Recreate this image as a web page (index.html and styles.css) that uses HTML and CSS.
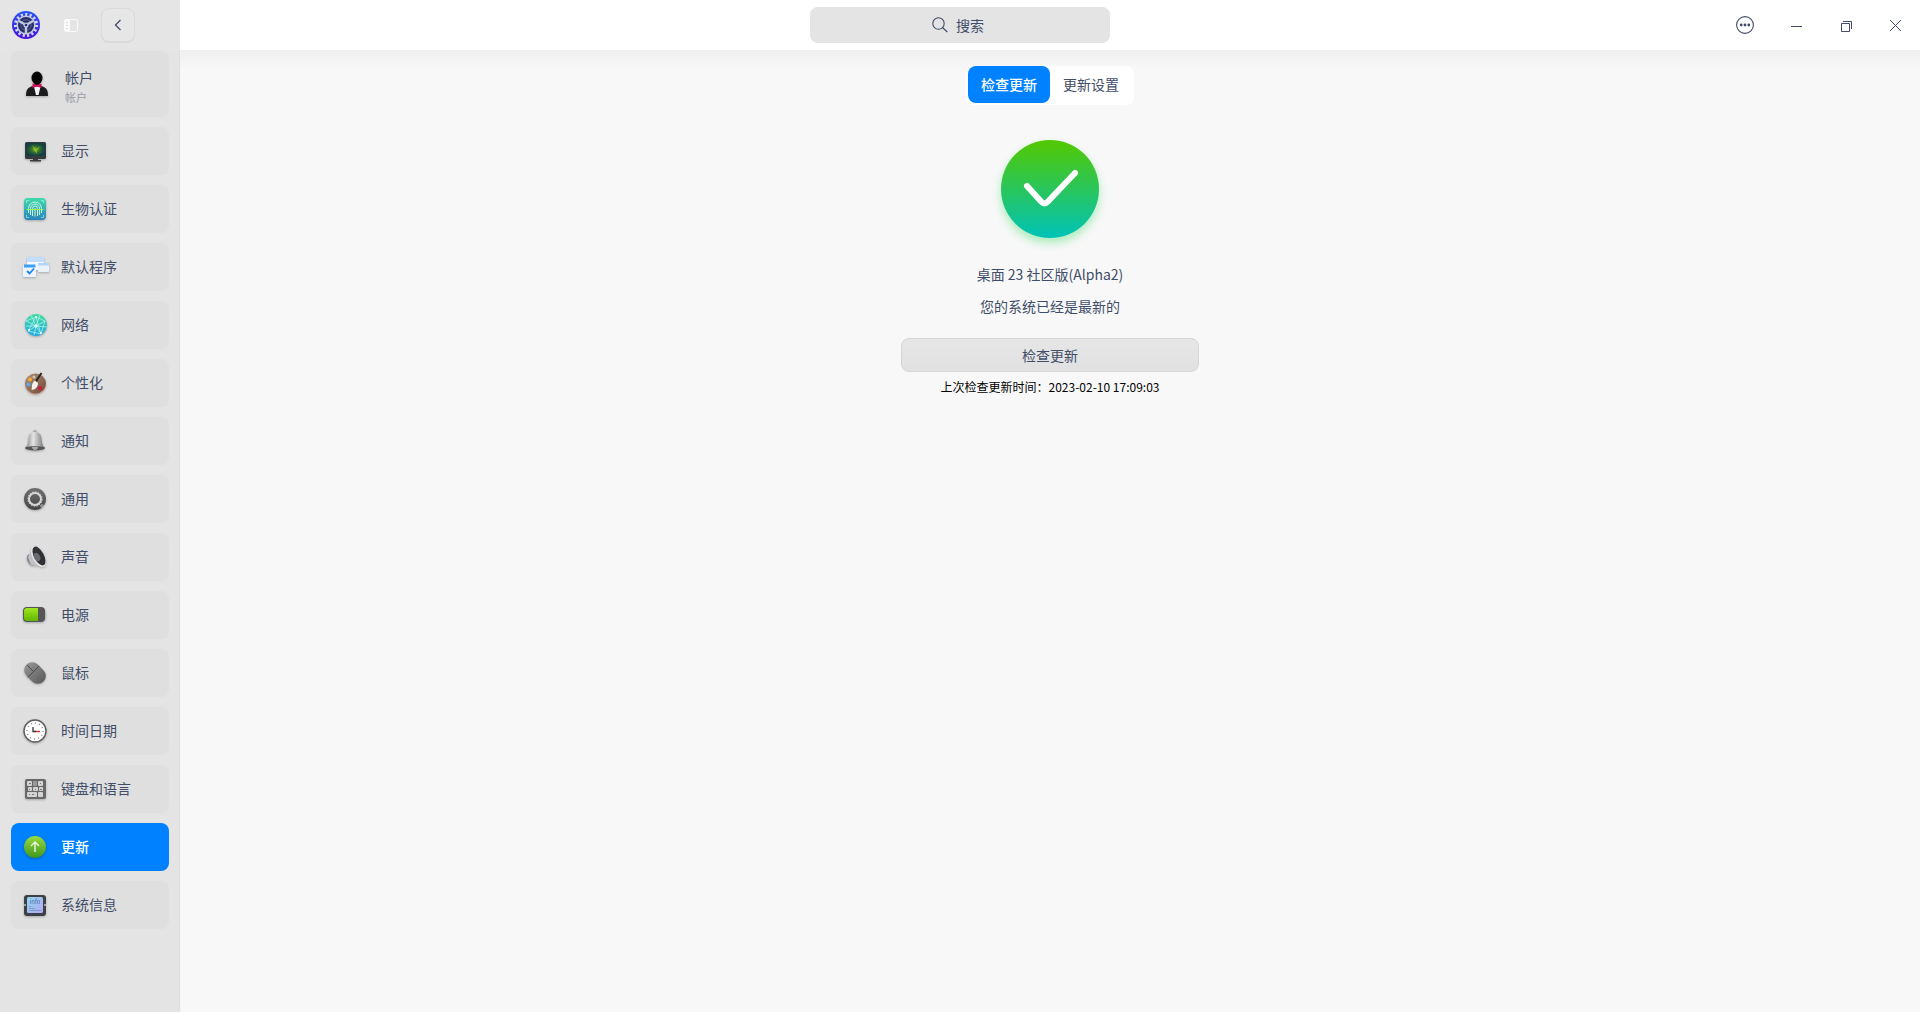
FILE: index.html
```html
<!DOCTYPE html>
<html lang="zh-CN">
<head>
    <meta charset="UTF-8">
    <meta name="viewport" content="width=device-width, initial-scale=1.0">
    <title>控制中心</title>
    <link rel="stylesheet" href="styles.css">
</head>
<body>

<header class="titlebar">
    <div class="titlebar-left">
        <svg class="logo" viewBox="0 0 28 28">
            <defs>
                <linearGradient id="logo-bg" x1="0" y1="0" x2="0" y2="1">
                    <stop offset="0" stop-color="#2b55f5"/>
                    <stop offset="1" stop-color="#4a12d8"/>
                </linearGradient>
            </defs>
            <circle cx="14" cy="14" r="14" fill="url(#logo-bg)"/>
            <circle cx="14" cy="14" r="10.6" fill="none" stroke="#d5dcf5" stroke-width="3" stroke-dasharray="2.1 2.34"/>
            <circle cx="14" cy="14" r="9.6" fill="#c3cae0"/>
            <circle cx="14" cy="14" r="8" fill="#262c66"/>
            <circle cx="14" cy="14" r="5.2" fill="none" stroke="#4c5487" stroke-width="1.4"/>
            <path d="M14 14V22M14 14L7 10M14 14L21 10" stroke="#c3cae0" stroke-width="2.4"/>
            <circle cx="14" cy="14" r="2.6" fill="#c3cae0"/>
            <circle cx="14" cy="14" r="1.3" fill="#2b2f86"/>
        </svg>
        <button class="sidebar-toggle" aria-label="侧边栏">
            <svg width="14" height="13" viewBox="0 0 14 13">
                <rect x="0.5" y="0.5" width="13" height="12" rx="1.5" fill="none" stroke="#f8f8f8"/>
                <path d="M1 1H6V12H1z" fill="#fbfbfb"/>
                <path d="M2 3.5H4M2 6.5H4M2 9.5H4" stroke="#dcdcdc"/>
            </svg>
        </button>
        <button class="back-btn" aria-label="返回">
            <svg width="8" height="12" viewBox="0 0 8 12">
                <path d="M6.5 1L1.5 6L6.5 11" fill="none" stroke="#414d68" stroke-width="1.3"/>
            </svg>
        </button>
    </div>

    <label class="search">
        <svg width="16" height="16" viewBox="0 0 16 16">
            <circle cx="6.5" cy="6.5" r="5.7" fill="none" stroke="#414d68" stroke-width="1.1"/>
            <path d="M10.7 10.7L15.3 15" stroke="#414d68" stroke-width="1.2"/>
        </svg>
        <input type="text" placeholder="搜索" aria-label="搜索">
    </label>

    <div class="window-controls">
        <button aria-label="菜单">
            <svg width="18" height="18" viewBox="0 0 18 18">
                <circle cx="9" cy="9" r="8.4" fill="none" stroke="#414d68" stroke-width="1.1"/>
                <g fill="#414d68">
                    <circle cx="5.2" cy="9" r="1.4"/>
                    <circle cx="9" cy="9" r="1.4"/>
                    <circle cx="12.8" cy="9" r="1.4"/>
                </g>
            </svg>
        </button>
        <button aria-label="最小化">
            <svg width="16" height="16" viewBox="0 0 16 16">
                <path d="M4 9.5H15" stroke="#414d68"/>
            </svg>
        </button>
        <button aria-label="还原">
            <svg width="16" height="16" viewBox="0 0 16 16">
                <path d="M4.5 6.5H12.5V14.500H4.500zM6 4.500H14.500V12" fill="none" stroke="#414d68"/>
            </svg>
        </button>
        <button aria-label="关闭">
            <svg width="16" height="16" viewBox="0 0 16 16">
                <path d="M3 3L14 14M14 3L3 14" stroke="#414d68"/>
            </svg>
        </button>
    </div>
</header>

<div class="layout">
    <!-- Module list -->
    <nav class="sidebar">
        <a class="nav-item account" href="#account">
            <svg class="avatar" viewBox="0 0 24 26">
                <path d="M1 25C1 18 3 16.500 8 15H16C21 16.500 23 18 23 25z" fill="#1c1c1e"/>
                <path d="M9 15.500L11 24H13.500L15.500 15.500z" fill="#f4f4f4"/>
                <ellipse cx="12" cy="7" rx="5.500" ry="6.500" fill="#060606"/>
                <path d="M9.500 11H14.500V15H9.500z" fill="#060606"/>
                <path d="M7.500 12.500L12 14L16.500 12.500V17L12 15.500L7.500 17z" fill="#d3125f"/>
            </svg>
            <span class="account-text">
                <span>帐户</span>
                <small>帐户</small>
            </span>
        </a>
        <a class="nav-item" href="#display">
            <svg viewBox="0 0 24 24">
                <defs>
                    <radialGradient id="screen">
                        <stop offset="0" stop-color="#7fb414"/>
                        <stop offset="0.5" stop-color="#2c6a35"/>
                        <stop offset="1" stop-color="#133f40"/>
                    </radialGradient>
                </defs>
                <rect x="2" y="3" width="21" height="17" rx="1.500" fill="#373a3c"/>
                <rect x="3" y="4" width="19" height="13" fill="url(#screen)"/>
                <path d="M9 6L13 10L18 7L14 11L14 15L11 11z" fill="#a3ce2c" opacity="0.6"/>
                <path d="M10 20H15V21H18V22.500H7V21H10z" fill="#3c3c3c"/>
            </svg>
            <span>显示</span>
        </a>
        <a class="nav-item" href="#biometric">
            <svg viewBox="0 0 24 24">
                <defs>
                    <linearGradient id="finger" x1="0" y1="0" x2="0" y2="1">
                        <stop offset="0" stop-color="#3fdcab"/>
                        <stop offset="1" stop-color="#2b83bd"/>
                    </linearGradient>
                </defs>
                <rect x="1" y="1" width="22" height="22" rx="4" fill="url(#finger)"/>
                <g fill="none" stroke="#c5f5df" stroke-width="1">
                    <path d="M3.500 6V3.500H6M18 3.500H20.500V6M3.500 18V20.500H6M18 20.500H20.500V18" opacity="0.6"/>
                    <path d="M5.500 16V11.500A6.500 6.500 0 0 1 18.500 11.500V16M7.500 18V11.500A4.500 4.500 0 0 1 16.500 11.500V18M9.500 19V11.500A2.500 2.500 0 0 1 14.500 11.500V19M12 11V19.500"/>
                </g>
                <path d="M3.500 12.500H20.500" stroke="#a5ee55"/>
            </svg>
            <span>生物认证</span>
        </a>
        <a class="nav-item" href="#defapp">
            <svg viewBox="0 0 24 24">
                <rect x="4" y="2" width="17" height="13" rx="1" fill="#f6f9ff"/>
                <path d="M4 3A1 1 0 0 1 5 2H20A1 1 0 0 1 21 3V7H4z" fill="#c2dcfb"/>
                <rect x="15" y="8" width="11" height="9" rx="1" fill="#eaf2ff"/>
                <path d="M15 8H26V10.500H15z" fill="#b3d4fb"/>
                <rect x="0" y="10" width="13" height="12" rx="1" fill="#eff5fe"/>
                <path d="M1 9.500H12.500V12.500H1z" fill="#3ca0f8"/>
                <path d="M4 16L6.500 18.500L11 13.500" fill="none" stroke="#1586ef" stroke-width="1.800"/>
            </svg>
            <span>默认程序</span>
        </a>
        <a class="nav-item" href="#network">
            <svg viewBox="0 0 24 24">
                <defs>
                    <linearGradient id="globe" x1="0" y1="0" x2="0" y2="1">
                        <stop offset="0" stop-color="#40dda0"/>
                        <stop offset="1" stop-color="#20a9e6"/>
                    </linearGradient>
                </defs>
                <circle cx="13" cy="12" r="11" fill="url(#globe)"/>
                <path d="M3 8L13 4L22 8L13 13L5 18L13 4L18 21L13 13L3 8M22 8L18 21L5 18M13 13L24 14M13 13L11 22M8 2L13 13L3 13M17 2L13 13" fill="none" stroke="#bcf7ed" stroke-width="0.700"/>
                <g fill="#eafff9">
                    <circle cx="13" cy="13" r="1.500"/>
                    <circle cx="13" cy="4" r="1"/>
                    <circle cx="18" cy="20" r="1"/>
                    <circle cx="6" cy="17" r="1"/>
                </g>
            </svg>
            <span>网络</span>
        </a>
        <a class="nav-item" href="#personalization">
            <svg viewBox="0 0 24 24">
                <defs>
                    <linearGradient id="palette" x1="0" y1="0" x2="1" y2="1">
                        <stop offset="0" stop-color="#b09078"/>
                        <stop offset="1" stop-color="#6f4a38"/>
                    </linearGradient>
                </defs>
                <ellipse cx="12.500" cy="14" rx="10.300" ry="9.500" fill="#dd7a5c" opacity="0.500"/>
                <ellipse cx="12.500" cy="12.500" rx="10.500" ry="10" fill="url(#palette)"/>
                <circle cx="7" cy="8.500" r="2" fill="#f4aa35"/>
                <circle cx="5.500" cy="13.500" r="2" fill="#56a9ef"/>
                <circle cx="11" cy="6" r="1.500" fill="#d6c8b8"/>
                <circle cx="17" cy="17" r="2" fill="#db1239"/>
                <path d="M18.500 2L12.500 11" stroke="#27211f" stroke-width="1.800"/>
                <path d="M12 9.500L15 12C15 16 12 19 8.500 19C9.500 17 7.500 13 12 9.500z" fill="#f5f2ee"/>
            </svg>
            <span>个性化</span>
        </a>
        <a class="nav-item" href="#notification">
            <svg viewBox="0 0 24 24">
                <defs>
                    <linearGradient id="bell" x1="0" x2="1">
                        <stop offset="0" stop-color="#8a8a8a"/>
                        <stop offset="0.4" stop-color="#e4e4e4"/>
                        <stop offset="1" stop-color="#777"/>
                    </linearGradient>
                </defs>
                <circle cx="12" cy="3" r="2" fill="#aaa"/>
                <ellipse cx="12" cy="19" rx="10" ry="2.500" fill="#555"/>
                <path d="M3 18C5 16 5 13 5.500 9C6 5 8.500 3 12 3S18 5 18.500 9C19 13 19 16 21 18C17 17 7 17 3 18z" fill="url(#bell)"/>
                <path d="M9 18H15C15 22 9 22 9 18z" fill="#aaa"/>
            </svg>
            <span>通知</span>
        </a>
        <a class="nav-item" href="#common">
            <svg viewBox="0 0 24 24">
                <defs>
                    <linearGradient id="gear" x1="0" y1="0" x2="0" y2="1">
                        <stop offset="0" stop-color="#707070"/>
                        <stop offset="1" stop-color="#454545"/>
                    </linearGradient>
                </defs>
                <circle cx="12" cy="12" r="11" fill="url(#gear)"/>
                <circle cx="12" cy="12" r="6" fill="none" stroke="#d7d7d7" stroke-width="2"/>
                <circle cx="12" cy="12" r="7.200" fill="none" stroke="#d7d7d7" stroke-width="1" stroke-dasharray="1.500 1.300"/>
                <circle cx="19" cy="19" r="1.300" fill="none" stroke="#ccc" stroke-width="0.800"/>
            </svg>
            <span>通用</span>
        </a>
        <a class="nav-item" href="#sound">
            <svg viewBox="0 0 24 24">
                <ellipse cx="8" cy="15" rx="3.500" ry="6" transform="rotate(-28 8 15)" fill="#85878d"/>
                <path d="M5 12L10 3L19 21L8 20z" fill="#c0c0c6"/>
                <ellipse cx="15.500" cy="11.500" rx="6" ry="11.500" transform="rotate(-28 15.500 11.500)" fill="#e7e7ea"/>
                <ellipse cx="16" cy="11" rx="5" ry="10.300" transform="rotate(-28 16 11)" fill="#303134"/>
                <ellipse cx="14" cy="12" rx="3" ry="4.500" transform="rotate(-28 14 12)" fill="#6a6b6f"/>
            </svg>
            <span>声音</span>
        </a>
        <a class="nav-item" href="#power">
            <svg viewBox="0 0 24 24">
                <defs>
                    <linearGradient id="battery" x1="0" y1="0" x2="0" y2="1">
                        <stop offset="0" stop-color="#a0e71f"/>
                        <stop offset="1" stop-color="#61b600"/>
                    </linearGradient>
                </defs>
                <rect x="20" y="8" width="3" height="8" rx="1.500" fill="#b9b9b9"/>
                <rect x="0" y="4" width="22" height="15" rx="4" fill="#555"/>
                <path d="M4 5H15V18H4A3 3 0 0 1 1 15V8A3 3 0 0 1 4 5z" fill="url(#battery)"/>
            </svg>
            <span>电源</span>
        </a>
        <a class="nav-item" href="#mouse">
            <svg viewBox="0 0 24 24">
                <defs>
                    <linearGradient id="mouse-body" x1="0" y1="0" x2="0" y2="1">
                        <stop offset="0" stop-color="#929292"/>
                        <stop offset="1" stop-color="#5e5e5e"/>
                    </linearGradient>
                </defs>
                <g transform="rotate(-45 12 12)">
                    <rect x="4" y="0" width="16" height="24" rx="8" fill="url(#mouse-body)"/>
                    <path d="M4 10H20M12 1V10" stroke="#484848" stroke-width="0.900"/>
                </g>
            </svg>
            <span>鼠标</span>
        </a>
        <a class="nav-item" href="#datetime">
            <svg viewBox="0 0 24 24">
                <circle cx="12" cy="12" r="11" fill="#fff" stroke="#5c5c5c" stroke-width="1.400"/>
                <circle cx="12" cy="12" r="8" fill="none" stroke="#777" stroke-width="1.500" stroke-dasharray="0.800 3.389"/>
                <path d="M12 12.500H17" stroke="#e32c2c" stroke-width="1.400"/>
                <path d="M10 8V12.500H13" fill="none" stroke="#333" stroke-width="1.300"/>
            </svg>
            <span>时间日期</span>
        </a>
        <a class="nav-item" href="#keyboard">
            <svg viewBox="0 0 24 24">
                <rect x="2" y="2" width="21" height="20" rx="2" fill="#686868"/>
                <g fill="#d3d3d3">
                    <rect x="4" y="4" width="5" height="5" rx="1"/>
                    <rect x="10" y="4" width="4" height="5" rx="1" fill="#999"/>
                    <rect x="15" y="4" width="5" height="5" rx="1"/>
                    <rect x="5" y="10" width="4" height="4" rx="1"/>
                    <rect x="10" y="10" width="5" height="4" rx="1"/>
                    <rect x="16" y="10" width="4" height="4" rx="1"/>
                    <rect x="4" y="15" width="10" height="5" rx="1"/>
                    <rect x="15" y="15" width="5" height="5" rx="1"/>
                </g>
                <path d="M6 6.500H8M17 6.500H18M6 12.500H7M12 12.500H13M17 12.500H19M6 17.500H7M9 17.500H11" stroke="#777"/>
            </svg>
            <span>键盘和语言</span>
        </a>
        <a class="nav-item active" href="#update" aria-current="page">
            <svg viewBox="0 0 24 24">
                <defs>
                    <linearGradient id="update" x1="0" y1="0" x2="0" y2="1">
                        <stop offset="0" stop-color="#98dc3e"/>
                        <stop offset="1" stop-color="#3e951f"/>
                    </linearGradient>
                </defs>
                <circle cx="12" cy="12" r="11" fill="url(#update)"/>
                <path d="M12 17V7.500M8 11L12 7L16 11" fill="none" stroke="#e6f8e0" stroke-width="1.400"/>
            </svg>
            <span>更新</span>
        </a>
        <a class="nav-item" href="#systeminfo">
            <svg viewBox="0 0 24 24">
                <defs>
                    <linearGradient id="info" x1="0" y1="0" x2="1" y2="1">
                        <stop offset="0" stop-color="#8ed8f1"/>
                        <stop offset="1" stop-color="#b5a9f2"/>
                    </linearGradient>
                </defs>
                <rect x="1" y="2" width="22" height="21" rx="3" fill="#3d4045"/>
                <path d="M1 11H3V13H1zM21 11H23V13H21z" fill="#9aa0a6"/>
                <rect x="4" y="4" width="16" height="16" rx="1.500" fill="url(#info)"/>
                <text class="info-glyph" x="12" y="11" text-anchor="middle">info</text>
                <path d="M6 13.500H8M6 15.500H12M6 17.500H18" stroke="#7193c2" stroke-width="0.800"/>
            </svg>
            <span>系统信息</span>
        </a>
    </nav>

    <main class="content">
        <div class="tabs">
            <button class="tab active">检查更新</button>
            <button class="tab">更新设置</button>
        </div>

        <!-- Update status -->
        <section class="status">
            <svg class="status-icon" viewBox="0 0 98 98">
                <defs>
                    <linearGradient id="ok" x1="0" y1="0" x2="0" y2="1">
                        <stop offset="0" stop-color="#53c800"/>
                        <stop offset="1" stop-color="#00c3b8"/>
                    </linearGradient>
                </defs>
                <circle cx="49" cy="49" r="49" fill="url(#ok)"/>
                <path d="M26 46L40.500 62Q43.500 65 46.500 62L74 33" fill="none" stroke="#fff" stroke-width="6" stroke-linecap="round"/>
            </svg>
            <p>桌面 23 社区版(Alpha2)</p>
            <p>您的系统已经是最新的</p>
            <button class="check-btn">检查更新</button>
            <p class="last-check">上次检查更新时间：2023-02-10 17:09:03</p>
        </section>
    </main>
</div>

</body>
</html>
```
FILE: styles.css
```css
* {
    box-sizing: border-box;
}
body {
    margin: 0;
    min-height: 100vh;
    display: flex;
    flex-direction: column;
    font-family: "Noto Sans CJK SC", sans-serif;
    font-size: 14px;
    line-height: 20px;
    color: #414d68;
    background: #f8f8f8;
}
button, input {
    font: inherit;
    color: inherit;
    border: none;
    padding: 0;
    background: none;
}
button {
    cursor: pointer;
}
svg {
    display: block;
    flex: none;
}

/* Title bar */
.titlebar {
    display: grid;
    grid-template-columns: 1fr 300px 1fr;
    align-items: center;
    height: 50px;
    background: linear-gradient(to right, #e5e5e5 180px, #fff 180px);
}
.titlebar-left {
    display: flex;
    align-items: center;
    padding-left: 12px;
}
.logo {
    width: 28px;
    height: 28px;
}
.sidebar-toggle {
    margin: 0 23px 0 24px;
}
.back-btn {
    width: 34px;
    height: 34px;
    display: flex;
    align-items: center;
    justify-content: center;
    border: 1px solid #dadada;
    border-radius: 8px;
    background: #e6e6e6;
    box-shadow: 0 1px 1px rgba(0, 0, 0, 0.05);
}
.search {
    display: flex;
    align-items: center;
    justify-content: center;
    gap: 8px;
    height: 36px;
    padding-right: 4px;
    border-radius: 8px;
    background: #e4e4e4;
}
.search input {
    width: 28px;
    outline: none;
}
.search input:focus {
    width: 240px;
}
.search input::placeholder {
    color: #414d68;
    opacity: 1;
}
.window-controls {
    display: flex;
    justify-content: flex-end;
}
.window-controls button {
    width: 50px;
    height: 50px;
    display: flex;
    align-items: center;
    justify-content: center;
}

/* Sidebar */
.layout {
    flex: 1;
    display: flex;
}
.sidebar {
    width: 180px;
    padding: 1px 10px 20px 11px;
    display: flex;
    flex-direction: column;
    gap: 10px;
    background: #e4e4e4;
    border-right: 1px solid #dedede;
}
.nav-item {
    display: flex;
    align-items: center;
    gap: 14px;
    height: 48px;
    padding: 0 12px;
    border-radius: 8px;
    background: #dfdfdf;
    color: inherit;
    text-decoration: none;
}
.nav-item svg {
    width: 24px;
    height: 24px;
    overflow: visible;
    filter: drop-shadow(0 1px 1px rgba(0, 0, 0, 0.25));
}
.nav-item > span {
    padding-bottom: 2px;
}
.nav-item.active {
    background: #0081ff;
    color: #fff;
    font-weight: 500;
}
.nav-item.account {
    height: 66px;
    padding: 0 14px;
    gap: 16px;
}
.nav-item .avatar {
    height: 26px;
}
.nav-item .account-text {
    display: flex;
    flex-direction: column;
    padding: 6px 0 0;
}
.account-text small {
    font-size: 11px;
    color: #989daa;
}
.info-glyph {
    font-size: 6px;
    fill: #4c6f9b;
}

/* Content */
.content {
    flex: 1;
    display: flex;
    flex-direction: column;
    align-items: center;
    padding-top: 16px;
    background: linear-gradient(#eee, #f8f8f8 20px);
}
.tabs {
    display: flex;
    padding: 0 2px 2px;
    border-radius: 8px;
    background: #fff;
}
.tab {
    height: 37px;
    padding: 0 13px 2px;
    border-radius: 8px;
}
.tab.active {
    background: #0081ff;
    color: #fff;
    font-weight: 500;
}
.status {
    display: flex;
    flex-direction: column;
    align-items: center;
    padding-top: 35px;
}
.status-icon {
    width: 98px;
    height: 98px;
    margin-bottom: 26px;
    overflow: visible;
    filter: drop-shadow(0 5px 5px rgba(50, 220, 90, 0.4));
}
.status p {
    margin: 0 0 12px;
}
.check-btn {
    width: 298px;
    height: 34px;
    margin: 10px 0 5px;
    border: 1px solid #d6d6d6;
    border-radius: 8px;
    background: linear-gradient(#e6e6e6, #e1e1e1);
}
.status .last-check {
    font-size: 12px;
    color: #000;
}
```
